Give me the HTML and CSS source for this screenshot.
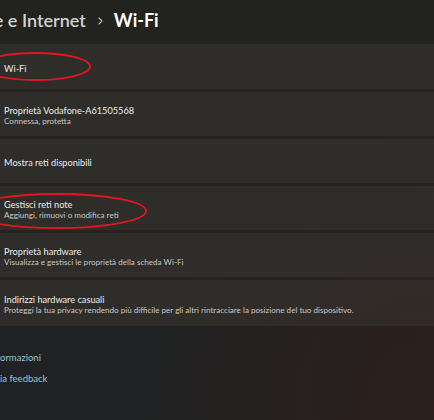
FILE: index.html
```html
<!DOCTYPE html>
<html lang="it">
<head>
<meta charset="utf-8">
<title>Wi-Fi</title>
<link rel="stylesheet" href="styles.css">
</head>
<body>
<div class="page">
  <header class="crumbs">
    <span class="crumb-parent">Rete e Internet</span>
    <svg class="chev" width="5" height="8" viewBox="0 0 5 8"><path d="M1 1 L4 4 L1 7" fill="none" stroke="#bdbdbd" stroke-width="1.1" stroke-linecap="round" stroke-linejoin="round"/></svg>
    <span class="crumb-current">Wi-Fi</span>
  </header>

  <div class="list">
    <div class="row row-first"><div class="title">Wi-Fi</div></div>
    <div class="row"><div class="title">Proprietà Vodafone-A61505568</div><div class="sub">Connessa, protetta</div></div>
    <div class="row"><div class="title">Mostra reti disponibili</div></div>
    <div class="row"><div class="title">Gestisci reti note</div><div class="sub">Aggiungi, rimuovi o modifica reti</div></div>
    <div class="row"><div class="title">Proprietà hardware</div><div class="sub">Visualizza e gestisci le proprietà della scheda Wi-Fi</div></div>
    <div class="row row-last"><div class="title">Indirizzi hardware casuali</div><div class="sub">Proteggi la tua privacy rendendo più difficile per gli altri rintracciare la posizione del tuo dispositivo.</div></div>
  </div>

  <div class="links">
    <div class="link">ormazioni</div>
    <div class="link">ia feedback</div>
  </div>

  <svg class="marks" width="434" height="420" viewBox="0 0 434 420">
    <ellipse cx="35" cy="66.5" rx="55" ry="13.5" fill="none" stroke="#e3161f" stroke-width="1.8"/>
    <ellipse cx="57" cy="211" rx="89" ry="17" fill="none" stroke="#e3161f" stroke-width="1.8"/>
  </svg>
</div>
</body>
</html>
```
FILE: styles.css
```css
html, body {
  margin: 0;
  padding: 0;
}
body {
  width: 434px;
  height: 420px;
  overflow: hidden;
  font-family: Lato, "Noto Sans", sans-serif;
}
.page {
  position: relative;
  width: 434px;
  height: 420px;
  overflow: hidden;
  background:
    radial-gradient(circle at 100% 100%, rgba(56, 30, 26, 0.4) 0, rgba(56, 30, 26, 0) 280px),
    linear-gradient(90deg, #1f2124 0%, #222221 60%, #25211f 100%);
  background-attachment: fixed;
}
.crumbs {
  height: 44px;
  line-height: 40px;
  background: #22221f;
  display: flex;
  align-items: baseline;
  white-space: nowrap;
  font-size: 18px;
  font-weight: 700;
}
.crumb-parent {
  margin-left: -33px;
  color: #d2d2d2;
  font-weight: 600;
}
.chev {
  margin: 0 11px 0 12px;
  align-self: center;
  position: relative;
  top: -1px;
}
.crumb-current {
  color: #ffffff;
}
.list {
  display: flex;
  flex-direction: column;
  gap: 3px;
  background: #242320;
}
.row {
  height: 44px;
  box-sizing: border-box;
  padding: 3px 0 0 4px;
  display: flex;
  flex-direction: column;
  justify-content: center;
  background:
    radial-gradient(circle at 100% 100%, rgba(64, 36, 32, 0.3) 0, rgba(64, 36, 32, 0) 300px),
    #2e2d2a;
  background-attachment: fixed;
  white-space: nowrap;
}
.row-first {
  height: 45px;
}
.row-last {
  height: 46px;
}
.title {
  font-size: 9.2px;
  line-height: 11px;
  color: #ececec;
}
.sub {
  font-size: 8.1px;
  line-height: 10px;
  color: #c8c8c8;
}
.links {
  padding-top: 20.5px;
}
.link {
  font-size: 9.5px;
  line-height: 21.5px;
  color: #99c6d8;
}
.marks {
  position: absolute;
  left: 0;
  top: 0;
  pointer-events: none;
}
```
